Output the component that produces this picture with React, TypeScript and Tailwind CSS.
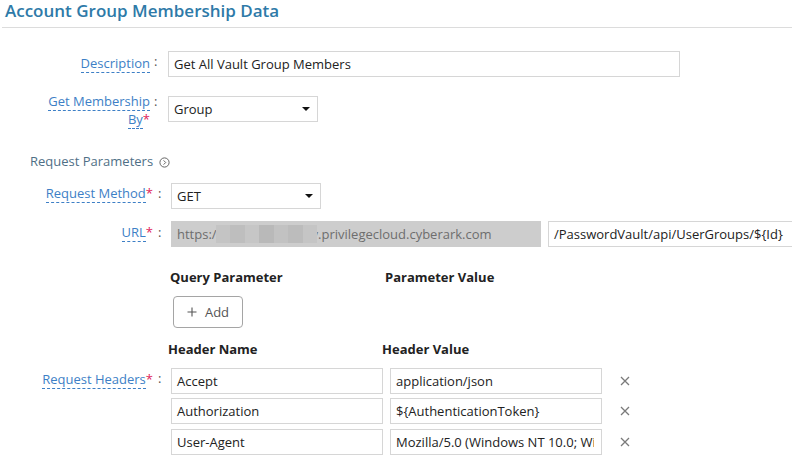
import React from "react";

const Caret = () => (
  <svg width="8" height="4" viewBox="0 0 8 4" className="block">
    <polygon points="0,0 8,0 4,4" fill="#111" />
  </svg>
);

const X = () => (
  <svg width="10" height="10" viewBox="0 0 10 10" className="block">
    <path d="M1 1 L9 9 M9 1 L1 9" stroke="#7a7a7a" strokeWidth="1.3" />
  </svg>
);

const Lbl = ({ text, req }: { text: string; req?: boolean }) => (
  <>
    <span className="border-b border-dashed border-[#3d7fc6] text-[#3d7fc6]">{text}</span>
    {req && <span className="text-[#e0245b]">*</span>}
  </>
);

export default function App() {
  const blur = ["#c4c4c4", "#bebebe", "#c6c6c6", "#b9b9b9", "#c2c2c2", "#bcbcbc", "#c5c5c5"];
  return (
    <div
      className="w-[792px] h-[457px] overflow-hidden bg-white text-[13px] leading-[18px] text-[#333]"
      style={{ fontFamily: "'Open Sans', 'Noto Sans', sans-serif" }}
    >
      {/* Title */}
      <div className="h-[28px] ml-[2px] border-b border-[#dcdcdc]">
        <div className="pl-[3px] text-[17px] leading-[21px] font-semibold text-[#2e7aa8]">
          Account Group Membership Data
        </div>
      </div>

      {/* Description */}
      <div className="flex items-start mt-[23px]">
        <div className="shrink-0 w-[150px] pt-[3px] text-right">
          <Lbl text="Description" />
        </div>
        <div className="shrink-0 w-[18px] pt-[1px] pl-[4px] text-[#555]">:</div>
        <div className="shrink-0 w-[512px] h-[26px] border border-[#d6d6d6] pl-[5px] leading-[24px] text-[#222]">
          Get All Vault Group Members
        </div>
      </div>

      {/* Get Membership By */}
      <div className="flex items-start mt-[15px]">
        <div className="shrink-0 ml-[44px] w-[106px] text-right">
          <Lbl text="Get Membership By" req />
        </div>
        <div className="shrink-0 w-[18px] pl-[4px] text-[#555]">:</div>
        <div className="shrink-0 mt-[4px] w-[150px] h-[26px] border border-[#d6d6d6] pl-[5px] pr-[7px] flex items-center justify-between text-[#222]">
          <span>Group</span>
          <Caret />
        </div>
      </div>

      {/* Request Parameters */}
      <div className="mt-[24px] pl-[30px] flex items-center text-[#4f6f86]">
        <span>Request Parameters</span>
        <svg width="11" height="11" viewBox="0 0 11 11" className="ml-[6px] mt-[2px]">
          <circle cx="5.5" cy="5.5" r="4.6" fill="none" stroke="#555" strokeWidth="0.9" />
          <path d="M4.6 3.4 L6.7 5.5 L4.6 7.6" fill="none" stroke="#555" strokeWidth="0.9" />
        </svg>
      </div>

      {/* Request Method */}
      <div className="flex items-start mt-[13px]">
        <div className="shrink-0 w-[153px] pt-[1px] text-right">
          <Lbl text="Request Method" req />
        </div>
        <div className="shrink-0 w-[18px] pt-[1px] pl-[5px] text-[#555]">:</div>
        <div className="shrink-0 w-[150px] h-[26px] border border-[#d6d6d6] pl-[5px] pr-[7px] flex items-center justify-between text-[#222]">
          <span>GET</span>
          <Caret />
        </div>
      </div>

      {/* URL */}
      <div className="flex items-start mt-[12px]">
        <div className="shrink-0 w-[153px] pt-[2px] text-right">
          <Lbl text="URL" req />
        </div>
        <div className="shrink-0 w-[18px] pt-[2px] pl-[5px] text-[#555]">:</div>
        <div className="shrink-0 relative w-[370px] h-[26px] bg-[#cdcdcd] pl-[6px] leading-[26px] text-[#6e6e6e] whitespace-nowrap">
          https:/<span className="inline-block w-[95px]" />v.privilegecloud.cyberark.com
          <div className="absolute left-[45px] top-[4px] h-[18px] w-[101px] flex">
            {blur.map((c, i) => (
              <div key={i} className="h-full flex-1" style={{ background: c }} />
            ))}
          </div>
        </div>
        <div className="shrink-0 ml-[7px] w-[260px] h-[26px] border border-[#d6d6d6] pl-[5px] leading-[24px] text-[#222] whitespace-nowrap">
          /PasswordVault/api/UserGroups/${"{Id}"}
        </div>
      </div>

      {/* Query Parameter headers */}
      <div className="flex mt-[21px] font-bold text-[#222]">
        <div className="shrink-0 ml-[170px] w-[215px]">Query Parameter</div>
        <div>Parameter Value</div>
      </div>
      <div className="ml-[173px] mt-[10px] w-[70px] h-[32px] border border-[#a5a5a5] rounded-[4px] flex items-center justify-center text-[#555]">
        <svg width="10" height="10" viewBox="0 0 10 10" className="mr-[8px]">
          <path d="M5 0.5 V9.5 M0.5 5 H9.5" stroke="#555" strokeWidth="1.1" />
        </svg>
        <span>Add</span>
      </div>

      {/* Header names */}
      <div className="flex mt-[12px] font-bold text-[#222]">
        <div className="shrink-0 ml-[168px] w-[214px]">Header Name</div>
        <div>Header Value</div>
      </div>

      <div className="flex items-start mt-[10px]">
        <div className="shrink-0 w-[153px] pt-[2px] text-right">
          <Lbl text="Request Headers" req />
        </div>
        <div className="shrink-0 w-[18px] pt-[1px] pl-[5px] text-[#555]">:</div>
        <div className="flex flex-col">
          {[
            ["Accept", "application/json", ""],
            ["Authorization", "${AuthenticationToken}", "mt-[4px]"],
            ["User-Agent", "Mozilla/5.0 (Windows NT 10.0; Win64; x64)", "mt-[5px]"],
          ].map(([n, v, m]) => (
            <div key={n} className={`flex items-center ${m}`}>
              <div className="shrink-0 w-[212px] h-[26px] border border-[#d6d6d6] pl-[5px] leading-[24px] text-[#222]">
                {n}
              </div>
              <div className="shrink-0 ml-[7px] w-[212px] h-[26px] border border-[#d6d6d6] pl-[5px] leading-[24px] text-[#222]">
                <div className="w-[198px] overflow-hidden whitespace-nowrap">{v}</div>
              </div>
              <div className="shrink-0 ml-[18px]">
                <X />
              </div>
            </div>
          ))}
        </div>
      </div>
    </div>
  );
}
